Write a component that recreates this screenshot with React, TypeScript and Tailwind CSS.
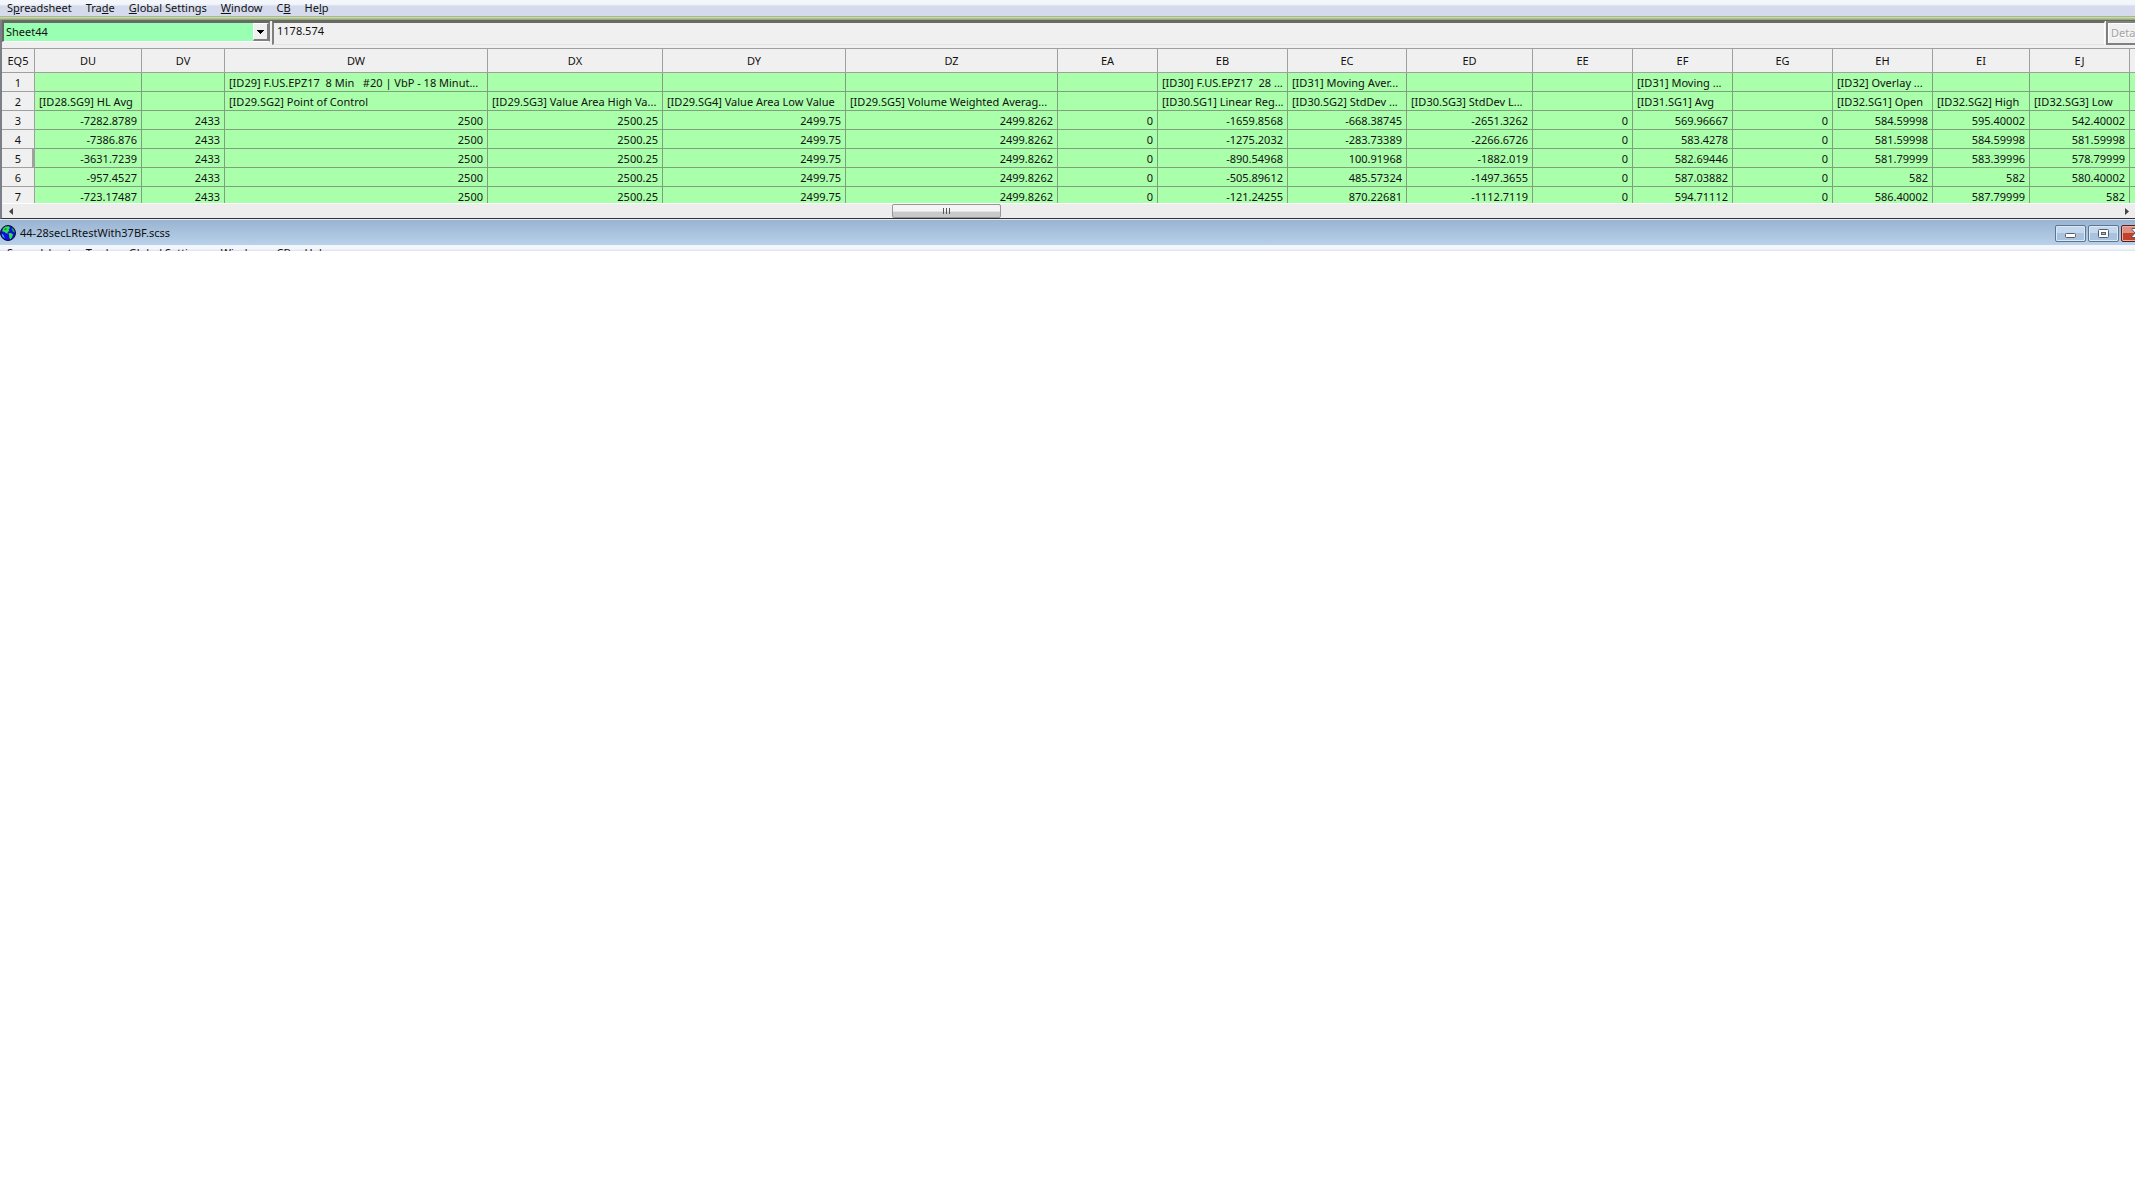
import React from "react";

type Column = {
  name: string;
  width: string;
  title?: string;
  label?: string;
  values: string[];
};

const same = (v: string) => [v, v, v, v, v];

const columns: Column[] = [
  { name: "DU", width: "w-[107px]", label: "[ID28.SG9] HL Avg", values: ["-7282.8789", "-7386.876", "-3631.7239", "-957.4527", "-723.17487"] },
  { name: "DV", width: "w-[83px]", values: same("2433") },
  { name: "DW", width: "w-[263px]", title: "[ID29] F.US.EPZ17  8 Min   #20 | VbP - 18 Minut...", label: "[ID29.SG2] Point of Control", values: same("2500") },
  { name: "DX", width: "w-[175px]", label: "[ID29.SG3] Value Area High Va...", values: same("2500.25") },
  { name: "DY", width: "w-[183px]", label: "[ID29.SG4] Value Area Low Value", values: same("2499.75") },
  { name: "DZ", width: "w-[212px]", label: "[ID29.SG5] Volume Weighted Averag...", values: same("2499.8262") },
  { name: "EA", width: "w-[100px]", values: same("0") },
  { name: "EB", width: "w-[130px]", title: "[ID30] F.US.EPZ17  28 ...", label: "[ID30.SG1] Linear Reg...", values: ["-1659.8568", "-1275.2032", "-890.54968", "-505.89612", "-121.24255"] },
  { name: "EC", width: "w-[119px]", title: "[ID31] Moving Aver...", label: "[ID30.SG2] StdDev ...", values: ["-668.38745", "-283.73389", "100.91968", "485.57324", "870.22681"] },
  { name: "ED", width: "w-[126px]", label: "[ID30.SG3] StdDev L...", values: ["-2651.3262", "-2266.6726", "-1882.019", "-1497.3655", "-1112.7119"] },
  { name: "EE", width: "w-[100px]", values: same("0") },
  { name: "EF", width: "w-[100px]", title: "[ID31] Moving ...", label: "[ID31.SG1] Avg", values: ["569.96667", "583.4278", "582.69446", "587.03882", "594.71112"] },
  { name: "EG", width: "w-[100px]", values: same("0") },
  { name: "EH", width: "w-[100px]", title: "[ID32] Overlay ...", label: "[ID32.SG1] Open", values: ["584.59998", "581.59998", "581.79999", "582", "586.40002"] },
  { name: "EI", width: "w-[97px]", label: "[ID32.SG2] High", values: ["595.40002", "584.59998", "583.39996", "582", "587.79999"] },
  { name: "EJ", width: "w-[100px]", label: "[ID32.SG3] Low", values: ["542.40002", "581.59998", "578.79999", "580.40002", "582"] },
];

// Each entry: text before the access key, the access key, text after it.
const menus: [string, string, string][] = [
  ["S", "p", "readsheet"],
  ["Tra", "d", "e"],
  ["", "G", "lobal Settings"],
  ["", "W", "indow"],
  ["C", "B", ""],
  ["He", "l", "p"],
];

const rowHead = "h-[19px] border-r border-b border-[#a0a0a0] bg-[#f0f0f0] px-0 pt-0.5 pb-0 text-center font-normal leading-4";
const cell = "h-[19px] overflow-hidden border-r border-b border-[#7f9f7f] bg-[#aaffaa] px-1 pt-0.5 pb-0 whitespace-pre leading-4";
const columnHead = "h-[25px] border-t border-r border-b border-[#a0a0a0] bg-[#f0f0f0] px-0 pt-px pb-0 font-normal";

function MenuBar() {
  return (
    <nav className="flex h-4 bg-linear-to-b from-[#f3f6fb] from-25% to-[#d5dbed] to-40%">
      {menus.map(([before, key, after]) => (
        <button key={before + key + after} type="button" className="px-[7px] leading-4 text-[#111]">
          {before}
          <span className="underline underline-offset-1">{key}</span>
          {after}
        </button>
      ))}
    </nav>
  );
}

function Toolbar() {
  return (
    <div className="flex h-[28px] items-start border-t border-[#5f6f5a] bg-[#f0f0f0]">
      <div className="relative h-[21px] w-[268px] shrink-0 border-t-2 border-r border-b border-l-2 border-t-[#696969] border-r-[#808080] border-b-white border-l-[#696969]">
        <select aria-label="Sheet" className="block h-full w-full appearance-none bg-[#99ffb3] pl-0.5 text-[#111] outline-none">
          <option>Sheet44</option>
        </select>
        <span className="pointer-events-none absolute inset-y-0 right-0 flex w-4 items-center justify-center border-t border-r-2 border-b-2 border-l border-[#808080] border-t-white border-l-white bg-[#f0f0f0]">
          <svg viewBox="0 0 7 4" className="h-1 w-[7px]" shapeRendering="crispEdges">
            <path d="M0 0h7v1H6v1H5v1H4v1H3V3H2V2H1V1H0z" fill="#000" />
          </svg>
        </span>
      </div>
      <input
        aria-label="Cell value"
        defaultValue="1178.574"
        className="ml-0.5 h-6 min-w-0 flex-1 border-t-2 border-r border-b border-l-2 border-t-[#696969] border-r-white border-b-[#e3e3e3] border-l-[#808080] bg-[#f0f0f0] pb-1.5 pl-[3px] text-[#111] outline-none"
      />
      <div className="ml-px w-[29px] shrink-0 overflow-hidden">
        <button type="button" disabled className="h-6 w-[60px] border-2 border-[#808080] bg-[#f0f0f0] pl-[3px] text-left text-[#a3a3a3] inset-shadow-[1px_1px_0_#ffffff] [text-shadow:1px_1px_0_#fff]">
          Details
        </button>
      </div>
    </div>
  );
}

function Sheet() {
  return (
    <div className="h-[155px] overflow-hidden">
      <table className="w-full table-fixed border-separate border-spacing-0">
        <colgroup>
          <col className="w-[33px]" />
          {columns.map((c) => (
            <col key={c.name} className={c.width} />
          ))}
          <col />
        </colgroup>
        <thead>
          <tr>
            <th className={columnHead}>EQ5</th>
            {columns.map((c) => (
              <th key={c.name} scope="col" className={columnHead}>
                {c.name}
              </th>
            ))}
            <th className="border-t border-b border-[#a0a0a0] bg-[#f0f0f0] p-0" />
          </tr>
        </thead>
        <tbody>
          {["title", "label"].map((kind, i) => (
            <tr key={kind}>
              <th scope="row" className={rowHead}>{i + 1}</th>
              {columns.map((c) => (
                <td key={c.name} className={cell}>{kind === "title" ? c.title : c.label}</td>
              ))}
              <td className="border-b border-[#7f9f7f] bg-[#aaffaa] p-0" />
            </tr>
          ))}
          {[0, 1, 2, 3, 4].map((i) => (
            <tr key={i}>
              <th scope="row" className={i === 2 ? `${rowHead} border-r-3 pl-0.5` : rowHead}>{i + 3}</th>
              {columns.map((c) => (
                <td key={c.name} className={`${cell} text-right`}>{c.values[i]}</td>
              ))}
              <td className="border-b border-[#7f9f7f] bg-[#aaffaa] p-0" />
            </tr>
          ))}
        </tbody>
      </table>
    </div>
  );
}

function ScrollBar() {
  return (
    <div className="flex h-[15px] items-stretch border-t border-white bg-[#ededed]">
      <button type="button" aria-label="Scroll left" className="flex w-[17px] items-center justify-center">
        <svg viewBox="0 0 4 7" className="h-[7px] w-1">
          <path d="M4 0v7L0 3.5z" fill="#444" />
        </svg>
      </button>
      <div className="grow-[873]" />
      <div className="flex w-[109px] items-center justify-center gap-0.5 rounded-xs border border-[#979797] bg-linear-to-b from-[#f4f4f4] from-50% to-[#c9c9cd] to-60%">
        <span className="h-1.5 w-px bg-[#555]" />
        <span className="h-1.5 w-px bg-[#555]" />
        <span className="h-1.5 w-px bg-[#555]" />
      </div>
      <div className="grow-[1118]" />
      <button type="button" aria-label="Scroll right" className="flex w-4 items-center justify-center">
        <svg viewBox="0 0 4 7" className="h-[7px] w-1">
          <path d="M0 0v7l4-3.5z" fill="#444" />
        </svg>
      </button>
    </div>
  );
}

function Globe() {
  return (
    <svg viewBox="0 0 16 16" className="h-4 w-4 shrink-0">
      <circle cx="8" cy="8" r="7.5" fill="#1010d8" stroke="#0a0a30" />
      <path d="M3 3.5 5.5 1.5 9 1.2 10 3 8.5 4.5 9.5 6 7.5 7 8 8.5 6 8.2 4.5 6.8 2.2 6.5z" fill="#2fe04a" />
      <path d="M8.5 8.2 11 8 13 9.5 12.2 12 10.5 14.2 9.5 13.5 9.2 11z" fill="#2fe04a" />
      <path d="M11.5 2.5 13.8 4.5 14.8 7.5 13 6.8 12 5z" fill="#1fa838" />
      <path d="M1.5 8.5 3.5 10 5 13.5 2.5 11.5z" fill="#2fb8e8" />
      <path d="M4 4 6 3l1 1-2 1.5z" fill="#0e8a2a" />
    </svg>
  );
}

const captionButton = "flex h-[17px] items-center justify-center rounded-xs border border-[#5c7590] bg-linear-to-b from-[#c3d7ee] from-45% to-[#a9c2dd] to-50% inset-shadow-[0_0_0_1px_#dbe8f6]";

function TitleBar() {
  return (
    <div className="flex h-[26px] items-center border-t border-[#e4ecf5] bg-linear-to-b from-[#99b4d1] to-[#b9d1ea] pt-px">
      <Globe />
      <h1 className="ml-1 flex-1 text-[#111]">44-28secLRtestWith37BF.scss</h1>
      <div className="flex gap-0.5">
        <button type="button" aria-label="Minimize" className={`${captionButton} w-[31px]`}>
          <svg viewBox="0 0 11 5" className="mt-1 h-[5px] w-[11px]">
            <rect x="0.5" y="0.5" width="10" height="4" rx="1" fill="#fff" stroke="#555c68" />
          </svg>
        </button>
        <button type="button" aria-label="Maximize" className={`${captionButton} w-[31px]`}>
          <svg viewBox="0 0 11 9" className="h-[9px] w-[11px]">
            <rect x="0.5" y="0.5" width="10" height="8" rx="1" fill="#fff" stroke="#555c68" />
            <rect x="3.5" y="3.5" width="4" height="2" fill="#a9c2dd" stroke="#555c68" />
          </svg>
        </button>
        <div className="w-3.5 overflow-hidden">
          <button type="button" aria-label="Close" className="flex h-[17px] w-[31px] items-center justify-center rounded-xs border border-[#5a1c1c] bg-linear-to-b from-[#dd9080] from-45% to-[#c0422b] to-50% inset-shadow-[0_0_0_1px_#e8b0a4]">
            <svg viewBox="0 0 12 10" className="h-2.5 w-3">
              <path d="M1 .5h3L6 3 8 .5h3v1L8 5l3 3.500v1H8L6 7 4 9.500H1v-1L4 5 1 1.500z" fill="#fff" stroke="#555c68" />
            </svg>
          </button>
        </div>
      </div>
    </div>
  );
}

export default function App() {
  return (
    <main className="min-h-screen overflow-hidden bg-white font-['Noto_Sans',sans-serif] text-[11px] text-[#111]">
      <MenuBar />
      <div className="h-1 border-t border-[#a9b98c] bg-linear-to-b from-[#d5e6b4] to-[#8f9c79]" />
      <section className="border-b border-l-2 border-b-[#333] border-l-[#7a7f88]">
        <Toolbar />
        <Sheet />
        <ScrollBar />
      </section>
      <TitleBar />
      <div className="h-1.5 overflow-hidden">
        <MenuBar />
      </div>
    </main>
  );
}
